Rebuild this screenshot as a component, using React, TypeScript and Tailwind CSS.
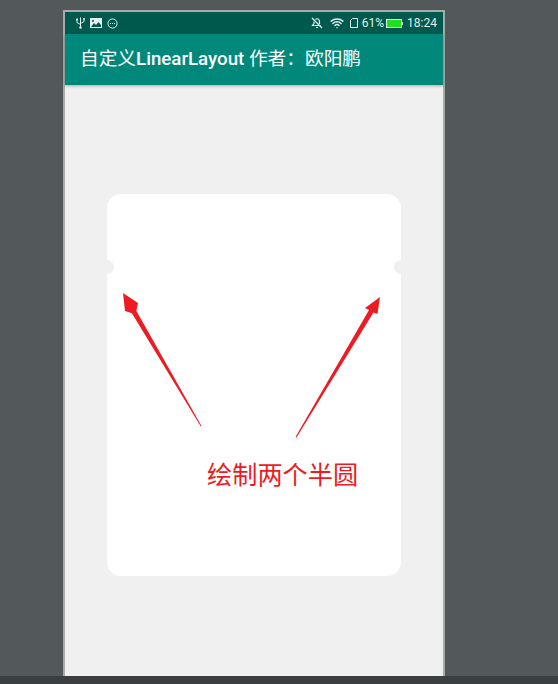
import { Wifi } from 'lucide-react';

const cjk = "font-['Roboto','Noto_Sans_CJK_SC',sans-serif]";

function StatusBar() {
  return (
    <div className="h-[22px] bg-[#00594d] flex items-center justify-between pl-[11px] pr-[6px] text-[#e4eeec]">
      <div className="flex items-center gap-[5px]">
        <svg width="9" height="12" viewBox="0 0 9 12" fill="none" stroke="currentColor" strokeWidth="1">
          <path d="M4.5 0.5V11M1 3V5.500L4.500 7.500M8 2.500V4.500L4.500 6.500" />
          <rect x="0" y="1.500" width="2" height="2" fill="currentColor" stroke="none" />
          <circle cx="8" cy="2" r="1" fill="currentColor" stroke="none" />
          <circle cx="4.500" cy="10.500" r="1.200" fill="currentColor" stroke="none" />
        </svg>
        <svg width="12" height="10" viewBox="0 0 12 10">
          <rect width="12" height="10" fill="currentColor" />
          <path d="M1 9L4 5L6 7L8.500 4L11 7V9Z" fill="#00594d" />
          <circle cx="3" cy="3" r="1" fill="#00594d" />
        </svg>
        <svg width="11" height="11" viewBox="0 0 11 11" fill="none" stroke="currentColor">
          <circle cx="5.500" cy="5.500" r="4.600" />
          <path d="M3 5.500H4M5 5.500H6M7 5.500H8" />
        </svg>
      </div>
      <div className="flex items-center text-[12px] font-['Roboto',sans-serif]">
        <svg width="12" height="12" viewBox="0 0 12 12" fill="none" stroke="currentColor" strokeWidth="1.200" className="mr-[7px]">
          <path d="M1 1L11 11" />
          <path d="M3.500 8.500H1.500L3 6.500V4.500M4.500 2.500C6 1 8.500 2 8.500 4.500V7" />
          <path d="M3.500 8.500H9.500M5 10.500H7" />
        </svg>
        <Wifi size={14} strokeWidth={2.5} className="mr-[6px]" />
        <svg width="8" height="10" viewBox="0 0 8 10" fill="none" stroke="currentColor" className="mr-[4px]">
          <path d="M2.500 0.500H7.500V9.500H0.500V2.500Z" />
        </svg>
        <span className="mr-[2px]">61%</span>
        <div className="w-[16px] h-[9px] border border-[#e4eeec]">
          <div className="h-full w-full bg-[#1fe01a]" />
        </div>
        <div className="w-[1px] h-[3px] bg-[#e4eeec] mr-[4px]" />
        <span>18:24</span>
      </div>
    </div>
  );
}

function Arrows() {
  return (
    <svg className="absolute left-0 top-0 pointer-events-none" width="294" height="382" viewBox="0 0 294 382">
      <path d="M94.500 232L29.300 116.700L31 109L16 99L18 117L24.900 119.300L93.800 232.500Z" fill="#ed1c24" />
      <path d="M188.500 243L262 116L258 114L273 103L270.500 120L266.500 118.500L189.500 243.500Z" fill="#ed1c24" />
    </svg>
  );
}

export default function App() {
  return (
    <div className="w-[558px] h-[684px] bg-[#53585a] flex flex-col overflow-hidden">
      <div className="flex-1 min-h-0 pl-[63px] pt-[10px]">
        <div className="w-[382px] h-full border-2 border-b-0 border-[#a9abab] flex flex-col bg-[#f0f0f0]">
          <StatusBar />
          <header className={`h-[51px] bg-[#00897b] flex items-center pl-[15px] text-white text-[18.7px] whitespace-pre shadow-[0_1px_3px_rgba(0,0,0,0.3)] ${cjk}`}>
            自定义<span className="font-medium">LinearLayout</span> 作者：欧阳鹏
          </header>
          <main className="pt-[109px] pl-[42px]">
            <div className="relative w-[294px] h-[382px] bg-white rounded-[14px]">
              <div className="absolute left-[-7px] top-[66px] w-[14px] h-[14px] rounded-full bg-[#f0f0f0]" />
              <div className="absolute right-[-7px] top-[66px] w-[14px] h-[14px] rounded-full bg-[#f0f0f0]" />
              <Arrows />
              <div className="absolute left-[100px] top-[264px] text-[25.200px] leading-[30px] text-[#ed1c24] font-['Noto_Sans_CJK_SC',sans-serif]">
                绘制两个半圆
              </div>
            </div>
          </main>
        </div>
      </div>
      <div className="h-[8px] bg-[#3c3f41]" />
    </div>
  );
}
